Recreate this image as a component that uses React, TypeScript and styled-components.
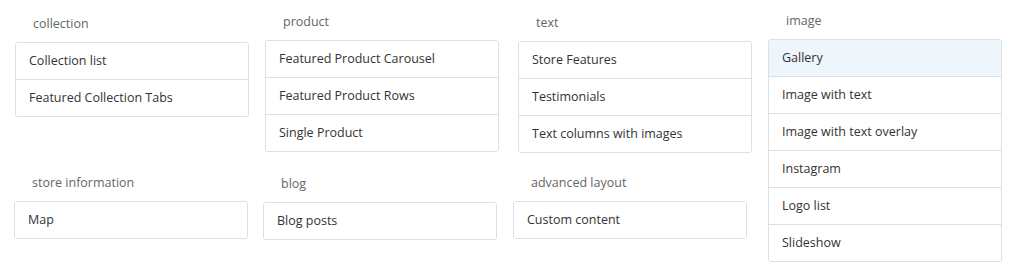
import React from "react";
import styled, { createGlobalStyle } from "styled-components";

const Global = createGlobalStyle`
  html, body { margin: 0; padding: 0; background: #fff; }
  body { font-family: "Open Sans", "Noto Sans", sans-serif; }
`;

const Page = styled.div`
  width: 1015px;
  height: 270px;
  display: flex;
  align-items: flex-start;
  padding-left: 14px;
  box-sizing: border-box;
`;

const Column = styled.div<{ $ml: number }>`
  display: flex;
  flex-direction: column;
  margin-left: ${(p) => p.$ml}px;
`;

const Group = styled.section<{ $mt: number; $ml?: number }>`
  width: 234px;
  margin-top: ${(p) => p.$mt}px;
  margin-left: ${(p) => p.$ml ?? 0}px;
`;

const Title = styled.h3`
  margin: 0 0 9px 18px;
  height: 18px;
  font-size: 12.5px;
  line-height: 18px;
  font-weight: 400;
  color: #666;
`;

const List = styled.ul`
  list-style: none;
  margin: 0;
  padding: 0;
  border: 1px solid #dcdfe3;
  border-radius: 3px;
  overflow: hidden;
  background: #fff;
`;

const Item = styled.li<{ $active?: boolean }>`
  height: 36px;
  line-height: 36px;
  padding-left: 13px;
  font-size: 12.5px;
  color: #333;
  background: ${(p) => (p.$active ? "#eef6fc" : "#fff")};
  & + & {
    border-top: 1px solid #dcdfe3;
  }
`;

type G = { title: string; items: string[]; mt: number; ml?: number; active?: string };

const columns: { ml: number; groups: G[] }[] = [
  {
    ml: 1,
    groups: [
      { title: "collection", items: ["Collection list", "Featured Collection Tabs"], mt: 15 },
      { title: "store information", items: ["Map"], mt: 57, ml: -1 },
    ],
  },
  {
    ml: 16,
    groups: [
      { title: "product", items: ["Featured Product Carousel", "Featured Product Rows", "Single Product"], mt: 13 },
      { title: "blog", items: ["Blog posts"], mt: 23, ml: -2 },
    ],
  },
  {
    ml: 19,
    groups: [
      { title: "text", items: ["Store Features", "Testimonials", "Text columns with images"], mt: 14 },
      { title: "advanced layout", items: ["Custom content"], mt: 21, ml: -5 },
    ],
  },
  {
    ml: 16,
    groups: [
      {
        title: "image",
        items: ["Gallery", "Image with text", "Image with text overlay", "Instagram", "Logo list", "Slideshow"],
        mt: 12,
        active: "Gallery",
      },
    ],
  },
];

export default function App() {
  return (
    <>
      <Global />
      <Page>
        {columns.map((c, ci) => (
          <Column key={ci} $ml={c.ml}>
            {c.groups.map((g) => (
              <Group key={g.title} $mt={g.mt} $ml={g.ml}>
                <Title>{g.title}</Title>
                <List>
                  {g.items.map((it) => (
                    <Item key={it} $active={it === g.active}>
                      {it}
                    </Item>
                  ))}
                </List>
              </Group>
            ))}
          </Column>
        ))}
      </Page>
    </>
  );
}
